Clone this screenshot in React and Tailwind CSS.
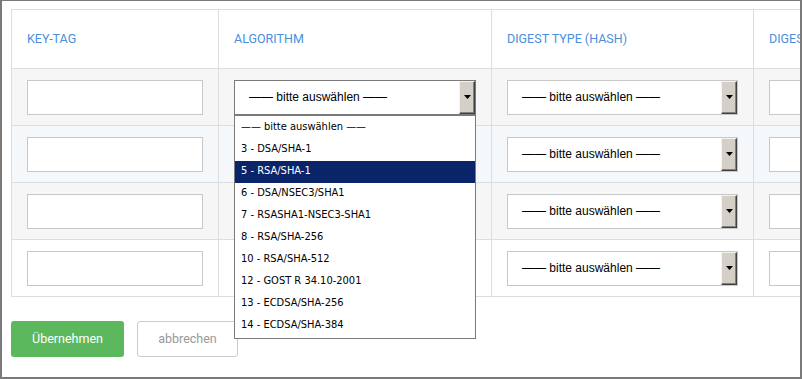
import React from 'react';

const algorithms = [
  '—— bitte auswählen ——',
  '3 - DSA/SHA-1',
  '5 - RSA/SHA-1',
  '6 - DSA/NSEC3/SHA1',
  '7 - RSASHA1-NSEC3-SHA1',
  '8 - RSA/SHA-256',
  '10 - RSA/SHA-512',
  '12 - GOST R 34.10-2001',
  '13 - ECDSA/SHA-256',
  '14 - ECDSA/SHA-384',
];

const rowBg = ['bg-[#f6f6f6]', 'bg-[#f4f8fb]', 'bg-[#f6f6f6]', 'bg-white'];

const headers = ['KEY-TAG', 'ALGORITHM', 'DIGEST TYPE (HASH)', 'DIGEST'];

// Classic windows-style select box with 3D arrow button
const ClassicSelect = ({ open = false }) => (
  <div className="relative w-full">
    <div
      className={`flex h-[35px] w-full items-stretch bg-white border ${
        open ? 'border-[#7a7a7a]' : 'border-[#c8c8c8]'
      }`}
    >
      <span className="flex flex-1 items-center pl-[14px] text-[12px] text-black font-['Liberation_Sans',Arial,sans-serif]">
        —— bitte auswählen ——
      </span>
      <span className="flex w-[16px] items-center justify-center bg-[#d4d0c8] border border-t-[#f4f3ef] border-l-[#f4f3ef] border-r-[#404040] border-b-[#404040] shadow-[inset_-1px_-1px_0_#808080]">
        <svg width="7" height="4" viewBox="0 0 7 4">
          <polygon points="0,0 7,0 3.5,4" fill="#000" />
        </svg>
      </span>
    </div>

    {open && (
      <div className="absolute left-0 top-full z-20 w-full bg-white border border-[#7a7a7a] py-px">
        {algorithms.map((item, i) => (
          <div
            key={item}
            className={`flex h-[22px] items-center pl-[6px] text-[11px] font-['DejaVu_Sans_Condensed','Liberation_Sans',sans-serif] ${
              i === 2 ? 'bg-[#0a246a] text-white' : 'text-black'
            }`}
          >
            {item}
          </div>
        ))}
      </div>
    )}
  </div>
);

const TextInput = () => (
  <div className="h-[35px] w-full bg-white border border-[#c8c8c8]" />
);

export default function App() {
  return (
    <div className="w-[802px] h-[379px] overflow-hidden bg-white border-t border-b-2 border-x-2 border-[#7a7a7a] pt-2 pl-[9px]">
      <div className="grid w-[1010px] grid-cols-[207px_273px_262px_268px] border-l border-t border-[#dddddd]">
        {/* Header */}
        {headers.map((h) => (
          <div
            key={h}
            className="flex h-[59px] items-center border-r border-b border-[#dddddd] bg-white px-[15px] whitespace-nowrap text-[12.5px] text-[#4a8fdb] font-['Roboto',Arial,sans-serif]"
          >
            {h}
          </div>
        ))}

        {/* Rows */}
        {rowBg.map((bg, r) => (
          <React.Fragment key={r}>
            <div className={`flex h-[57px] items-center border-r border-b border-[#dddddd] px-[15px] ${bg}`}>
              <TextInput />
            </div>
            <div className={`flex h-[57px] items-center border-r border-b border-[#dddddd] px-[15px] ${bg} ${r === 0 ? 'relative z-20' : ''}`}>
              <ClassicSelect open={r === 0} />
            </div>
            <div className={`flex h-[57px] items-center border-r border-b border-[#dddddd] px-[15px] ${bg}`}>
              <ClassicSelect />
            </div>
            <div className={`flex h-[57px] items-center border-r border-b border-[#dddddd] px-[15px] ${bg}`}>
              <TextInput />
            </div>
          </React.Fragment>
        ))}
      </div>

      {/* Actions */}
      <div className="mt-6 flex gap-[13px] font-['Roboto',Arial,sans-serif] text-[12.5px]">
        <button className="h-[36px] w-[113px] rounded-[3px] bg-[#5cb85c] text-white">
          Übernehmen
        </button>
        <button className="h-[36px] w-[101px] rounded-[3px] border border-[#cccccc] bg-white text-[#999999]">
          abbrechen
        </button>
      </div>
    </div>
  );
}
